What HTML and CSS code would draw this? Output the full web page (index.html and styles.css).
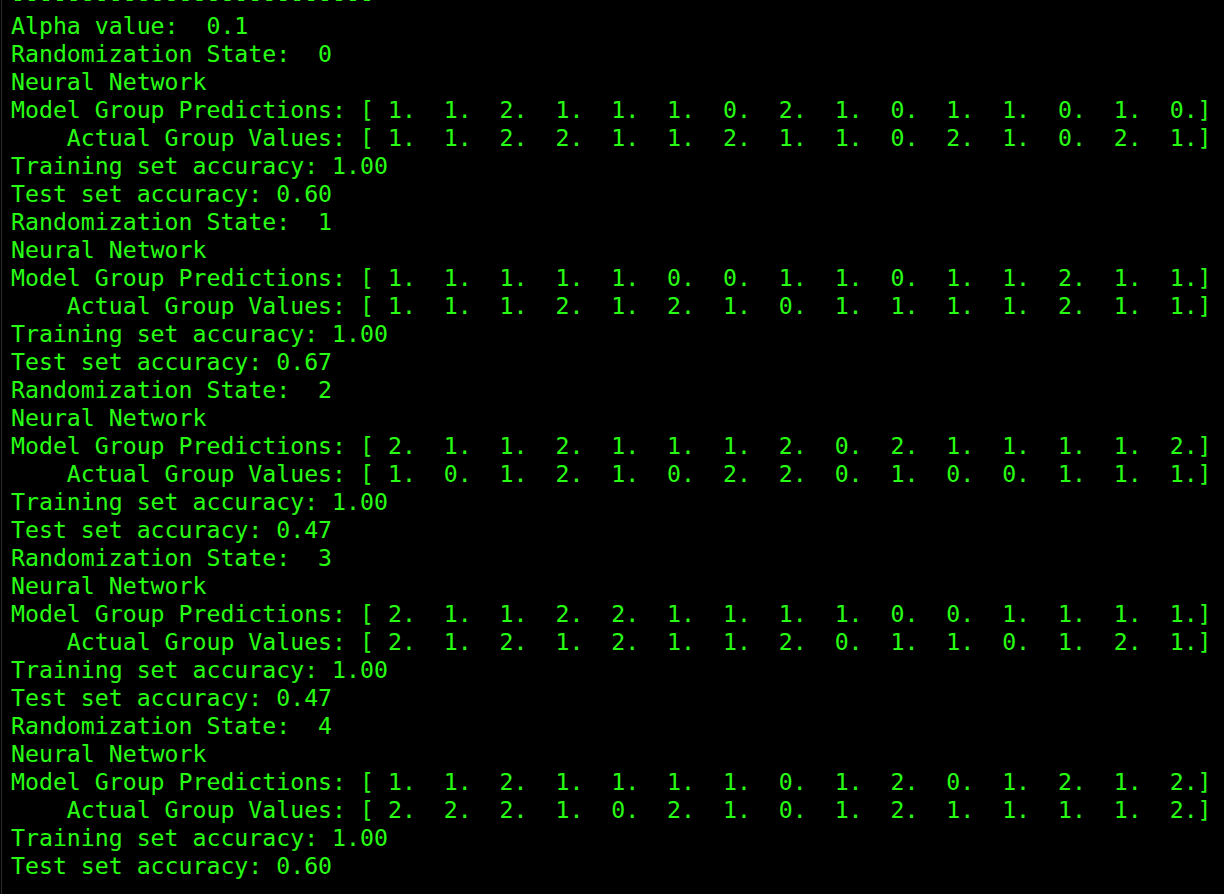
FILE: index.html
```html
<!DOCTYPE html>
<html lang="en">
<head>
<meta charset="utf-8">
<title>Terminal output</title>
<link rel="stylesheet" href="styles.css">
</head>
<body>
<div class="terminal">
<div class="rule rule-top">--------------------------</div>
<pre class="output">Alpha value:  0.1
Randomization State:  0
Neural Network
Model Group Predictions: [ 1.  1.  2.  1.  1.  1.  0.  2.  1.  0.  1.  1.  0.  1.  0.]
    Actual Group Values: [ 1.  1.  2.  2.  1.  1.  2.  1.  1.  0.  2.  1.  0.  2.  1.]
Training set accuracy: 1.00
Test set accuracy: 0.60
Randomization State:  1
Neural Network
Model Group Predictions: [ 1.  1.  1.  1.  1.  0.  0.  1.  1.  0.  1.  1.  2.  1.  1.]
    Actual Group Values: [ 1.  1.  1.  2.  1.  2.  1.  0.  1.  1.  1.  1.  2.  1.  1.]
Training set accuracy: 1.00
Test set accuracy: 0.67
Randomization State:  2
Neural Network
Model Group Predictions: [ 2.  1.  1.  2.  1.  1.  1.  2.  0.  2.  1.  1.  1.  1.  2.]
    Actual Group Values: [ 1.  0.  1.  2.  1.  0.  2.  2.  0.  1.  0.  0.  1.  1.  1.]
Training set accuracy: 1.00
Test set accuracy: 0.47
Randomization State:  3
Neural Network
Model Group Predictions: [ 2.  1.  1.  2.  2.  1.  1.  1.  1.  0.  0.  1.  1.  1.  1.]
    Actual Group Values: [ 2.  1.  2.  1.  2.  1.  1.  2.  0.  1.  1.  0.  1.  2.  1.]
Training set accuracy: 1.00
Test set accuracy: 0.47
Randomization State:  4
Neural Network
Model Group Predictions: [ 1.  1.  2.  1.  1.  1.  1.  0.  1.  2.  0.  1.  2.  1.  2.]
    Actual Group Values: [ 2.  2.  2.  1.  0.  2.  1.  0.  1.  2.  1.  1.  1.  1.  2.]
Training set accuracy: 1.00
Test set accuracy: 0.60</pre>
<div class="rule rule-bottom">--------------------------</div>
</div>
</body>
</html>
```
FILE: styles.css
```css
html, body {
  margin: 0;
  padding: 0;
  background: #000;
  height: 100%;
  overflow: hidden;
}

.terminal {
  margin-left: 1px;
  border-left: 1px solid #2b2b2b;
  height: 100%;
  padding-left: 9px;
  box-sizing: border-box;
  overflow: hidden;
  font-family: "DejaVu Sans Mono", "Liberation Mono", monospace;
  font-size: 23.2px;
  line-height: 28px;
  color: #28fe14;
}

.rule {
  white-space: pre;
  height: 28px;
}

.rule-top {
  margin-top: -16px;
}

.rule-bottom {
  margin-top: -1px;
}

.output {
  margin: 0;
  font: inherit;
  white-space: pre;
}
```
